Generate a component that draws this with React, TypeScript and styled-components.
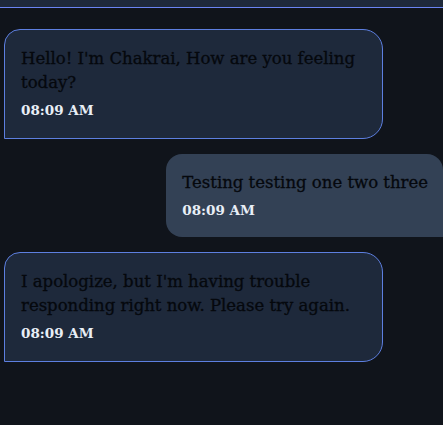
import * as React from 'react'
import styled, { createGlobalStyle } from 'styled-components'

const GlobalStyle = createGlobalStyle`
  html, body {
    margin: 0;
    padding: 0;
    background: #10141b;
    overflow: hidden;
  }
  body {
    font-family: 'DejaVu Serif', 'Liberation Serif', serif;
  }
`

const Page = styled.div`
  width: 443px;
  height: 425px;
  background: #10141b;
  overflow: hidden;
`

const TopBar = styled.div`
  height: 7px;
  background: #1e293b;
  border-bottom: 1px solid #6a84f2;
`

const MessageList = styled.div`
  width: 443px;
  display: flex;
  flex-direction: column;
  gap: 15px;
  padding: 21px 0 0 4px;
  box-sizing: border-box;
`

const Row = styled.div<{ $mine?: boolean }>`
  display: flex;
  justify-content: ${(p) => (p.$mine ? 'flex-end' : 'flex-start')};
`

const Bubble = styled.div<{ $mine?: boolean }>`
  box-sizing: border-box;
  padding: 17px 16px 17px 16px;
  color: #05080d;
  ${(p) =>
    p.$mine
      ? `
    background: #334155;
    border-radius: 16px 16px 0 16px;
    padding-right: 15px;
    padding-bottom: 16px;
  `
      : `
    width: 379px;
    background: #1e293b;
    border: 1px solid #5d7fe0;
    border-radius: 16px 20px 20px 0;
  `}
`

const Text = styled.div`
  font-size: 16.5px;
  line-height: 24px;
  white-space: pre-wrap;
  -webkit-text-stroke: 0.3px currentColor;
`

const Time = styled.div`
  margin-top: 4px;
  font-size: 13.5px;
  line-height: 22px;
  font-weight: bold;
  color: #e8eef6;
`

type Message = {
  text: string
  time: string
  mine?: boolean
}

const messages: Message[] = [
  { text: "Hello! I'm Chakrai, How are you feeling today?", time: '08:09 AM' },
  { text: 'Testing testing one two three', time: '08:09 AM', mine: true },
  {
    text: "I apologize, but I'm having trouble responding right now. Please try again.",
    time: '08:09 AM',
  },
]

export default function App() {
  return (
    <Page>
      <GlobalStyle />
      <TopBar />
      <MessageList>
        {messages.map((m, i) => (
          <Row key={i} $mine={m.mine}>
            <Bubble $mine={m.mine}>
              <Text>{m.text}</Text>
              <Time>{m.time}</Time>
            </Bubble>
          </Row>
        ))}
      </MessageList>
    </Page>
  )
}
